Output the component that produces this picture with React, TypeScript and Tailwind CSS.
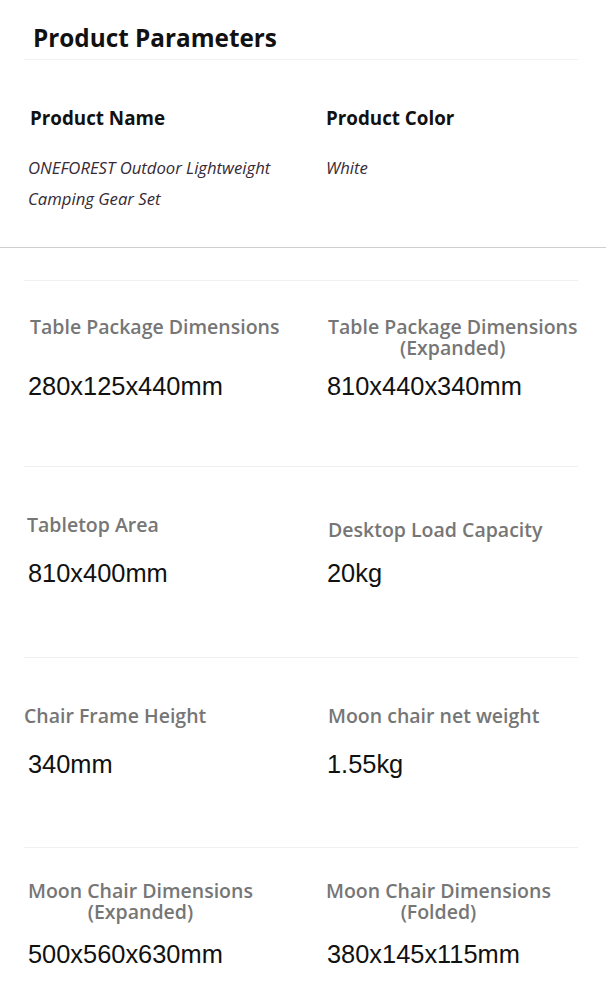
import React from "react";

type Spec = {
  label: string[];
  value: string;
  labelClass: string;
};

type Row = {
  pad: string;
  labelBox: string;
  items: [Spec, Spec];
};

const rows: Row[] = [
  {
    pad: "pt-[35px] pb-[66px]",
    labelBox: "h-[56px]",
    items: [
      { label: ["Table Package Dimensions"], value: "280x125x440mm", labelClass: "ml-[6px]" },
      { label: ["Table Package Dimensions", "(Expanded)"], value: "810x440x340mm", labelClass: "ml-[2px]" },
    ],
  },
  {
    pad: "pt-[47px] pb-[70px]",
    labelBox: "h-[45px]",
    items: [
      { label: ["Tabletop Area"], value: "810x400mm", labelClass: "ml-[3px]" },
      { label: ["Desktop Load Capacity"], value: "20kg", labelClass: "ml-[2px] mt-[5px]" },
    ],
  },
  {
    pad: "pt-[47px] pb-[69px]",
    labelBox: "h-[45px]",
    items: [
      { label: ["Chair Frame Height"], value: "340mm", labelClass: "ml-0" },
      { label: ["Moon chair net weight"], value: "1.55kg", labelClass: "ml-[2px]" },
    ],
  },
  {
    pad: "pt-[32px] pb-[40px]",
    labelBox: "h-[60px]",
    items: [
      { label: ["Moon Chair Dimensions", "(Expanded)"], value: "500x560x630mm", labelClass: "ml-[4px]" },
      { label: ["Moon Chair Dimensions", "(Folded)"], value: "380x145x115mm", labelClass: "ml-0 -mt-[2px]" },
    ],
  },
];

function Cell({ spec, labelBox, valueClass }: { spec: Spec; labelBox: string; valueClass: string }) {
  return (
    <div className="flex flex-col">
      <div className={labelBox}>
        <div
          className={`inline-flex flex-col items-center text-[19.5px] leading-[21px] font-semibold text-[#767676] ${spec.labelClass}`}
          style={{ fontFamily: '"Open Sans", "Noto Sans", sans-serif' }}
        >
          {spec.label.map((l) => (
            <span key={l} className="whitespace-nowrap">
              {l}
            </span>
          ))}
        </div>
      </div>
      <div
        className={`text-[25.4px] leading-[28px] text-[#111] ${valueClass}`}
        style={{ fontFamily: '"Liberation Sans", Arial, sans-serif' }}
      >
        {spec.value}
      </div>
    </div>
  );
}

export default function App() {
  return (
    <div
      className="w-[606px] h-[1008px] overflow-hidden bg-white"
      style={{ fontFamily: '"Open Sans", "Noto Sans", sans-serif' }}
    >
      <div className="px-[24px]">
        <h1 className="pt-[22px] pl-[9px] text-[24.3px] leading-[32px] font-bold text-[#111]">
          Product Parameters
        </h1>
        <div className="mt-[5px] h-px w-[554px] bg-[#f1f1f1]" />
        <div className="grid grid-cols-[302px_1fr] pt-[46px]">
          <div className="pl-[6px]">
            <div className="text-[18.8px] leading-[24px] font-bold text-[#111]">Product Name</div>
          </div>
          <div>
            <div className="text-[18.8px] leading-[24px] font-bold text-[#111]">Product Color</div>
          </div>
        </div>
        <div className="grid grid-cols-[302px_1fr] pt-[22px] pb-[33px]">
          <div className="pl-[4px] text-[16.7px] leading-[31px] italic text-[#352a35]">
            ONEFOREST Outdoor Lightweight
            <br />
            Camping Gear Set
          </div>
          <div className="text-[16.7px] leading-[31px] italic text-[#352a35]">White</div>
        </div>
      </div>
      <div className="h-px w-full bg-[#cfcfcf]" />
      <div className="px-[24px] pt-[32px]">
        {rows.map((row, i) => (
          <div key={i} className="border-t border-[#f0f0f0] w-[554px]">
            <div className={`grid grid-cols-[302px_1fr] ${row.pad}`}>
              <Cell spec={row.items[0]} labelBox={row.labelBox} valueClass="ml-[4px]" />
              <Cell spec={row.items[1]} labelBox={row.labelBox} valueClass="ml-[1px]" />
            </div>
          </div>
        ))}
      </div>
    </div>
  );
}
